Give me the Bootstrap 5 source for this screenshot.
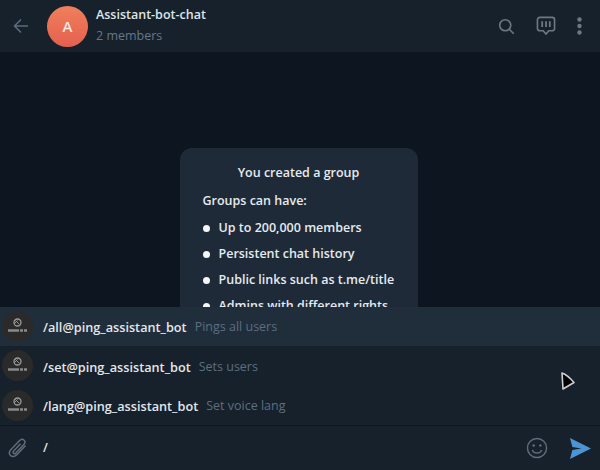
<!DOCTYPE html>
<html lang="en">
<head>
<meta charset="UTF-8">
<title>Assistant-bot-chat</title>
<link href="https://cdn.jsdelivr.net/npm/bootstrap@5.3.0/dist/css/bootstrap.min.css" rel="stylesheet">
<style>
html, body { height: 100%; }
body { width: 600px; height: 470px; overflow: hidden; background: #0e1621; font-family: "Open Sans", sans-serif; position: relative; }
svg { display: block; }
.app-shell { height: 470px; }
.top-bar { height: 52px; background: #17212b; padding-left: 12px; padding-right: 18px; }
.chat-avatar { width: 41px; height: 41px; background: linear-gradient(#f07f5b, #e4604f); color: #f3e6e0; font-size: 15px; font-weight: 600; margin-left: 17px; margin-right: 8px; }
.chat-title { color: #dfe4e8; font-size: 12.5px; font-weight: 600; line-height: 16px; margin-top: -1px; }
.chat-sub { color: #66778a; font-size: 12.5px; line-height: 16px; margin-top: 5px; }
.top-icons { gap: 21px; }
.chat-area { min-height: 0; padding-top: 96px; padding-right: 3px; overflow: hidden; background: #0c1520; }
.info-box { width: 238px; height: 220px; background: #1e2a38; border-radius: 12px; padding: 16px 23px; color: #e6eaee; font-size: 12.5px; font-weight: 600; line-height: 18px; flex: none; }
.info-head { text-align: center; margin-bottom: 10px; }
.info-list { list-style: none; padding: 0; margin: 9px 0 0; }
.info-list li { display: flex; align-items: center; margin-bottom: 8px; height: 18px; white-space: nowrap; }
.info-list li::before { content: ""; width: 7px; height: 7px; background: #f4f6f8; border-radius: 50%; margin-right: 9px; flex: none; }
.suggest-panel { background: #17212b; border-bottom: 1px solid #0f1822; }
.suggest-row { height: 39.5px; padding-left: 2px; color: #e3e7eb; font-size: 12.7px; font-weight: 600; }
.suggest-row.is-active { background: #202d3b; }
.suggest-label { padding-top: 3px; }
.bot-pic { width: 31px; height: 31px; background: #2b2a2b; margin-right: 10px; flex: none; }
.bot-desc { color: #5d6e80; font-weight: 400; margin-left: 8px; font-size: 12.5px; padding-top: 3px; }
.input-bar { height: 44px; background: #17212b; padding-left: 8px; padding-right: 9px; gap: 0; }
.slash-text { color: #dfe4e8; font-size: 12.5px; font-weight: 600; margin-left: 15px; }
.send-icon { margin-left: 22px; }
.mouse-arrow { position: absolute; left: 560px; top: 371px; }
</style>
</head>
<body>
<div class="app-shell d-flex flex-column">
  <div class="top-bar d-flex align-items-center flex-shrink-0">
    <svg width="18" height="18" viewBox="0 0 18 18" fill="none" stroke="#5c6b7a" stroke-width="1.6"><path d="M16 9H2.5M9 2.5 2.5 9 9 15.5"/></svg>
    <div class="chat-avatar rounded-circle d-flex align-items-center justify-content-center flex-shrink-0">A</div>
    <div class="flex-grow-1">
      <div class="chat-title">Assistant-bot-chat</div>
      <div class="chat-sub">2 members</div>
    </div>
    <div class="top-icons d-flex align-items-center">
      <svg width="17" height="17" viewBox="0 0 20 20" fill="none" stroke="#6d7883" stroke-width="1.900"><circle cx="8.500" cy="8.500" r="6.500"/><path d="m13 13 5.500 5.500"/></svg>
      <svg width="20" height="20" viewBox="0 0 21 21" fill="none" stroke="#6d7883" stroke-width="1.700"><path d="M4 1.500h13a2.500 2.500 0 0 1 2.500 2.500v9a2.500 2.500 0 0 1-2.500 2.500h-3.500l-3 3.500-3-3.500H4A2.500 2.500 0 0 1 1.500 13V4A2.500 2.500 0 0 1 4 1.500Z"/><path d="M6.500 5.500v6M10.500 5.500v6M14.500 5.500v6" stroke-width="1.900"/></svg>
      <svg width="5" height="18" viewBox="0 0 5 18" fill="#6d7883"><circle cx="2.500" cy="2.500" r="2.200"/><circle cx="2.500" cy="9" r="2.200"/><circle cx="2.500" cy="15.500" r="2.200"/></svg>
    </div>
  </div>

  <div class="chat-area flex-grow-1 d-flex justify-content-center">
    <div class="info-box">
      <div class="info-head">You created a group</div>
      <div>Groups can have:</div>
      <ul class="info-list">
        <li>Up to 200,000 members</li>
        <li>Persistent chat history</li>
        <li>Public links such as t.me/title</li>
        <li>Admins with different rights</li>
      </ul>
    </div>
  </div>

  <div class="suggest-panel flex-shrink-0">
    <div class="suggest-row is-active d-flex align-items-center">
      <div class="bot-pic rounded-circle d-flex align-items-center justify-content-center"><svg width="25" height="25" viewBox="0 0 25 25" fill="none"><circle cx="12.500" cy="8.500" r="3.500" stroke="#9a9a9a" stroke-width="1.300"/><path d="M10.500 6.500l4 4M9.500 9.500l3-3" stroke="#9a9a9a"/><path d="M3 16.500h11M15 16.500h3M19 16.500h3" stroke="#8a8a8a" stroke-width="2.400"/></svg></div>
      <span class="suggest-label">/all@ping_assistant_bot</span><span class="bot-desc">Pings all users</span>
    </div>
    <div class="suggest-row d-flex align-items-center">
      <div class="bot-pic rounded-circle d-flex align-items-center justify-content-center"><svg width="25" height="25" viewBox="0 0 25 25" fill="none"><circle cx="12.500" cy="8.500" r="3.500" stroke="#9a9a9a" stroke-width="1.300"/><path d="M10.500 6.500l4 4M9.500 9.500l3-3" stroke="#9a9a9a"/><path d="M3 16.500h11M15 16.500h3M19 16.500h3" stroke="#8a8a8a" stroke-width="2.400"/></svg></div>
      <span class="suggest-label">/set@ping_assistant_bot</span><span class="bot-desc">Sets users</span>
    </div>
    <div class="suggest-row d-flex align-items-center">
      <div class="bot-pic rounded-circle d-flex align-items-center justify-content-center"><svg width="25" height="25" viewBox="0 0 25 25" fill="none"><circle cx="12.500" cy="8.500" r="3.500" stroke="#9a9a9a" stroke-width="1.300"/><path d="M10.500 6.500l4 4M9.500 9.500l3-3" stroke="#9a9a9a"/><path d="M3 16.500h11M15 16.500h3M19 16.500h3" stroke="#8a8a8a" stroke-width="2.400"/></svg></div>
      <span class="suggest-label">/lang@ping_assistant_bot</span><span class="bot-desc">Set voice lang</span>
    </div>
  </div>

  <div class="input-bar d-flex align-items-center flex-shrink-0">
    <svg width="20" height="22" viewBox="0 0 20 22" fill="none" stroke="#5f6c79" stroke-width="1.500"><path d="M17.500 8.500 8.800 17.800c-2 2.100-4.800 2.200-6.300.7-1.500-1.500-1.300-4 .5-5.900l8.600-9c1.400-1.400 3.300-1.500 4.500-.4 1.200 1.200 1 3-.3 4.400l-8 8.500c-.7.700-1.700.8-2.300.2-.6-.6-.5-1.500.2-2.300l6.800-7.200"/></svg>
    <div class="slash-text flex-grow-1">/</div>
    <svg width="22" height="22" viewBox="0 0 23 23" fill="none" stroke="#5f6c79" stroke-width="1.500"><circle cx="11.500" cy="11.500" r="10"/><circle cx="8" cy="9" r="1.300" fill="#5f6c79" stroke="none"/><circle cx="15" cy="9" r="1.300" fill="#5f6c79" stroke="none"/><path d="M6.500 13.500c1 2.300 3 3.300 5 3.300s4-1 5-3.300"/></svg>
    <svg class="send-icon" width="21" height="21" viewBox="0 0 22 20" preserveAspectRatio="none"><path d="M0 0 22 10 0 20l2.500-8.500L12 10 2.500 8.500Z" fill="#4d95d2"/></svg>
  </div>
</div>
<svg class="mouse-arrow" width="16" height="20" viewBox="0 0 16 20"><path d="M2 2c3 1 9 6 12 9.500l-11 6.500Z" fill="#000" stroke="#cfcfcf" stroke-width="1.600" stroke-linejoin="round"/></svg>
</body>
</html>
